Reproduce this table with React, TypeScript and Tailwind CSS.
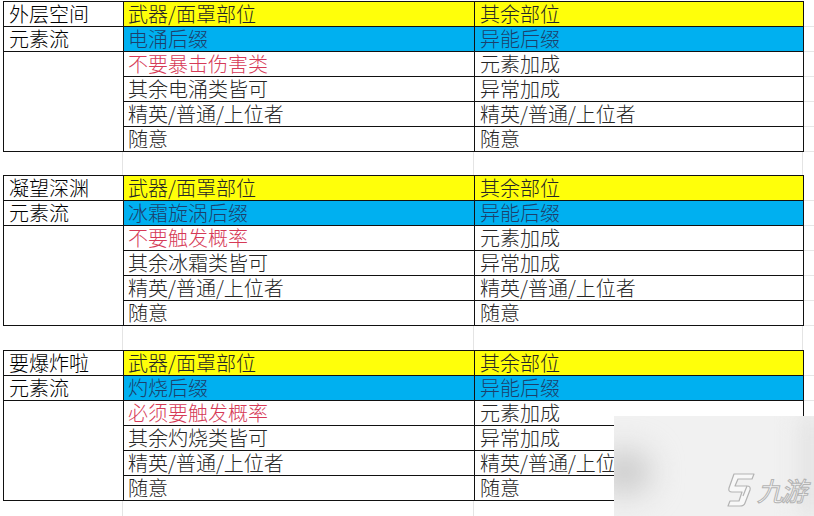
const sections = [
  {
    name: "外层空间",
    left: ["武器/面罩部位", "电涌后缀", "不要暴击伤害类", "其余电涌类皆可", "精英/普通/上位者", "随意"],
    right: ["其余部位", "异能后缀", "元素加成", "异常加成", "精英/普通/上位者", "随意"],
  },
  {
    name: "凝望深渊",
    left: ["武器/面罩部位", "冰霜旋涡后缀", "不要触发概率", "其余冰霜类皆可", "精英/普通/上位者", "随意"],
    right: ["其余部位", "异能后缀", "元素加成", "异常加成", "精英/普通/上位者", "随意"],
  },
  {
    name: "要爆炸啦",
    left: ["武器/面罩部位", "灼烧后缀", "必须要触发概率", "其余灼烧类皆可", "精英/普通/上位者", "随意"],
    right: ["其余部位", "异能后缀", "元素加成", "异常加成", "精英/普通/上位者", "随意"],
  },
];

function rowBg(i: number) {
  if (i === 0) return "bg-[#ffff0a]";
  if (i === 1) return "bg-[#00b0f0]";
  return "bg-white";
}

function textColor(i: number, isLeft: boolean) {
  if (i === 1) return "text-[#1d3f6b]";
  if (i === 2 && isLeft) return "text-[#d63a57]";
  return "text-[#262626]";
}

function Block({ data }: { data: (typeof sections)[number] }) {
  return (
    <div className="flex">
      <div className="grid w-[801px] grid-cols-[119px_350px_328px] grid-rows-[repeat(6,24px)] gap-px bg-[#111] p-px">
        {data.left.map((l, i) => (
          <div key={i} className="contents">
            {i === 0 && <div className="bg-white pl-[5px]">{data.name}</div>}
            {i === 1 && <div className="bg-white pl-[5px]">元素流</div>}
            {i === 2 && <div className="row-span-4 bg-white" />}
            <div className={`${rowBg(i)} ${textColor(i, true)} pl-[4px]`}>{l}</div>
            <div className={`${rowBg(i)} ${textColor(i, false)} pl-[5px]`}>{data.right[i]}</div>
          </div>
        ))}
      </div>
      <div className="flex w-[10px] flex-col pt-px">
        {[0, 1, 2, 3, 4, 5].map((k) => (
          <div key={k} className="h-[25px] border-b border-[#e6e6e6]" />
        ))}
      </div>
    </div>
  );
}

function GapRow({ h }: { h: string }) {
  return (
    <div className={`grid grid-cols-[120px_351px_329px_10px] ${h}`}>
      <div className="border-r border-[#e4e4e4]" />
      <div className="border-r border-[#e4e4e4]" />
      <div className="border-r border-[#e4e4e4]" />
      <div />
    </div>
  );
}

// 九游 mark: slanted outlined "9" shape
function Logo() {
  return (
    <svg width="30" height="36" viewBox="0 0 30 36" fill="none" stroke="#b3b3b3" strokeWidth="1.2" strokeLinejoin="round">
      <path
        d="M9 2 L29 2 L27 7 L13 7 L10 14 L22 14 Q26 14 25 18 L20 31 Q19 34 15 34 L3 34 L5 29 L14 29 L17 20 L7 20 Q3 20 4 16 Z"
        fill="#f8f8f8"
      />
      <path d="M22 14 L18 24" />
    </svg>
  );
}

export default function App() {
  return (
    <div className="relative h-[516px] w-[814px] overflow-hidden bg-white font-['Noto_Sans_CJK_SC',sans-serif] text-[20px] font-light leading-[24px]">
      <div className="flex flex-col pl-[3px] pt-px">
        <Block data={sections[0]} />
        <GapRow h="h-[23px]" />
        <Block data={sections[1]} />
        <GapRow h="h-[24px]" />
        <Block data={sections[2]} />
        <GapRow h="h-[20px]" />
      </div>

      <div className="absolute left-[614px] top-[416px] h-[100px] w-[200px] overflow-hidden bg-[#f1f1f1]">
        <div className="absolute -left-[14px] top-[36px] h-[40px] w-[50px] rounded-full bg-[#c6c6c6] blur-lg" />
        <div className="absolute -right-[10px] top-0 h-[100px] w-[24px] bg-[#e2e2e2] blur-md" />
        <div className="absolute left-[111px] top-[56px] flex items-center gap-[2px]">
          <Logo />
          <span className="text-[26px] font-normal italic leading-none tracking-[-2px] text-[#f8f8f8] [-webkit-text-stroke:1px_#b3b3b3]">
            九游
          </span>
        </div>
      </div>
    </div>
  );
}
